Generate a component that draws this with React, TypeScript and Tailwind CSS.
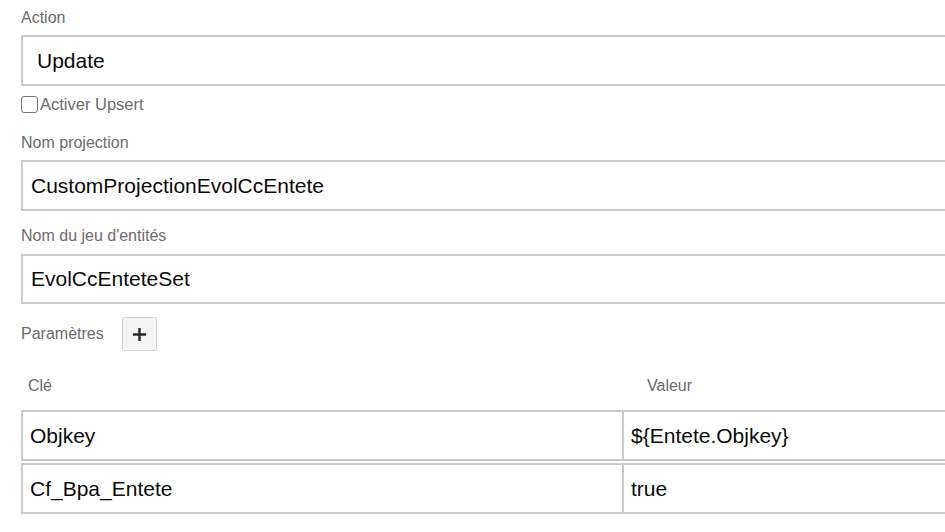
import React from "react";

const Label: React.FC<{ children: React.ReactNode; className?: string }> = ({ children, className = "" }) => (
  <div className={`h-[18px] leading-[18px] text-[16px] text-[#6b6b6b] ${className}`}>{children}</div>
);

const Field: React.FC<{ value: string; className?: string; pad?: string }> = ({ value, className = "", pad = "pl-[8px]" }) => (
  <div className={`flex items-center border-2 border-r-0 border-[#c9c9c9] bg-white text-[21px] text-[#0a0a0a] ${pad} ${className}`}>
    {value}
  </div>
);

const params = [
  { key: "Objkey", value: "${Entete.Objkey}" },
  { key: "Cf_Bpa_Entete", value: "true" },
];

export default function App() {
  return (
    <div className="w-[945px] h-[532px] overflow-hidden bg-white" style={{ fontFamily: '"Liberation Sans", Arial, sans-serif' }}>
      <div className="w-[1000px] pl-[21px] pt-[9px] flex flex-col">
        <Label>Action</Label>
        <Field value="Update" pad="pl-[14px]" className="mt-[8px] h-[51px]" />

        {/* upsert checkbox */}
        <label className="mt-[9px] flex items-center h-[18px] text-[16.5px] text-[#6b6b6b]">
          <span className="w-[17px] h-[17px] rounded-[3px] border-[1.5px] border-[#767676] bg-white mr-[2px]"></span>
          Activer Upsert
        </label>

        <Label className="mt-[21px]">Nom projection</Label>
        <Field value="CustomProjectionEvolCcEntete" className="mt-[8px] h-[51px]" />

        <Label className="mt-[16px]">Nom du jeu d'entités</Label>
        <Field value="EvolCcEnteteSet" className="mt-[9px] h-[50px]" />

        <div className="mt-[13px] flex items-center h-[34px]">
          <span className="text-[16px] text-[#6b6b6b]">Paramètres</span>
          <button className="ml-[18px] w-[35px] h-[34px] flex items-center justify-center bg-[#f4f4f4] border border-[#d4d4d4] rounded-[2px]">
            <svg width="15" height="15" viewBox="0 0 16 16" fill="none" stroke="#2a2a2a" strokeWidth="2.6">
              <path d="M8 1v14M1 8h14" />
            </svg>
          </button>
        </div>

        <div className="mt-[26px] grid grid-cols-[601px_1fr] h-[18px] text-[16px] leading-[18px] text-[#6b6b6b]">
          <span className="pl-[7px]">Clé</span>
          <span className="pl-[25px]">Valeur</span>
        </div>

        <div className="mt-[15px] flex flex-col gap-[2px]">
          {params.map((p) => (
            <div key={p.key} className="grid grid-cols-[601px_1fr] h-[51px] border-2 border-r-0 border-[#c9c9c9] text-[21px] text-[#0a0a0a]">
              <div className="flex items-center pl-[7px] border-r-2 border-[#c9c9c9]">{p.key}</div>
              <div className="flex items-center pl-[7px]">{p.value}</div>
            </div>
          ))}
        </div>
      </div>
    </div>
  );
}
